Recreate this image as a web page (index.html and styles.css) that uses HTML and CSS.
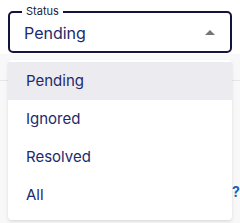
FILE: index.html
```html
<!DOCTYPE html>
<html lang="en">
<head>
  <meta charset="UTF-8" />
  <title>Status select</title>
  <link rel="stylesheet" href="styles.css">
</head>
<body>
  <div class="page">
    <div class="backdrop">
      <div class="rule"></div>
      <div class="help">?</div>
    </div>

    <fieldset class="select">
      <legend>Status</legend>
      <span class="value">Pending</span>
      <svg class="arrow" width="10" height="5" viewBox="0 0 10 5"><path d="M0 5 L5 0 L10 5 Z" fill="#757575"/></svg>
    </fieldset>

    <ul class="menu">
      <li class="item active">Pending</li>
      <li class="item">Ignored</li>
      <li class="item">Resolved</li>
      <li class="item">All</li>
    </ul>
  </div>
</body>
</html>
```

FILE: styles.css
```css
html, body {
  margin: 0;
  height: 100%;
  overflow: hidden;
  background: #fff;
  font-family: Inter, "Noto Sans", sans-serif;
}

.page {
  position: relative;
  width: 240px;
  height: 223px;
}

.backdrop {
  position: absolute;
  left: 0; top: 54px;
  width: 240px; height: 169px;
  background: #f8f8f9;
}

.backdrop .rule {
  position: absolute;
  left: 0; right: 0; top: 26px;
  border-top: 1px solid #e6e6ea;
}

.backdrop .help {
  position: absolute;
  left: 232px; top: 129px;
  font-size: 14px;
  font-weight: 700;
  color: #1a5fb4;
}

.select {
  position: absolute;
  left: 8px; top: 6px;
  width: 224px;
  height: 47px;
  box-sizing: border-box;
  margin: 0;
  padding: 0 13px 0 14px;
  border: 2px solid #14133f;
  border-radius: 5px;
  display: flex;
  align-items: center;
  justify-content: space-between;
  background: #fff;
}

.select legend {
  padding: 0 4px;
  margin-left: -2px;
  font-size: 11px;
  line-height: 11px;
  color: #1b1b3a;
}

.select .value {
  font-size: 16px;
  color: #1d2a6c;
  margin-top: -3px;
}

.select .arrow {
  margin-top: -4px;
  margin-right: 2px;
}

.menu {
  position: absolute;
  left: 8px; top: 60px;
  width: 224px;
  margin: 0;
  padding: 2px 0 6px;
  list-style: none;
  background: #fff;
  border-radius: 4px;
  box-shadow: 0 2px 4px rgba(0, 0, 0, 0.08), 0 1px 2px rgba(0, 0, 0, 0.05);
}

.menu .item {
  height: 38px;
  line-height: 38px;
  padding-left: 18px;
  font-size: 15px;
  color: #1d2a6c;
}

.menu .item.active {
  background: #ebebf0;
}
```
